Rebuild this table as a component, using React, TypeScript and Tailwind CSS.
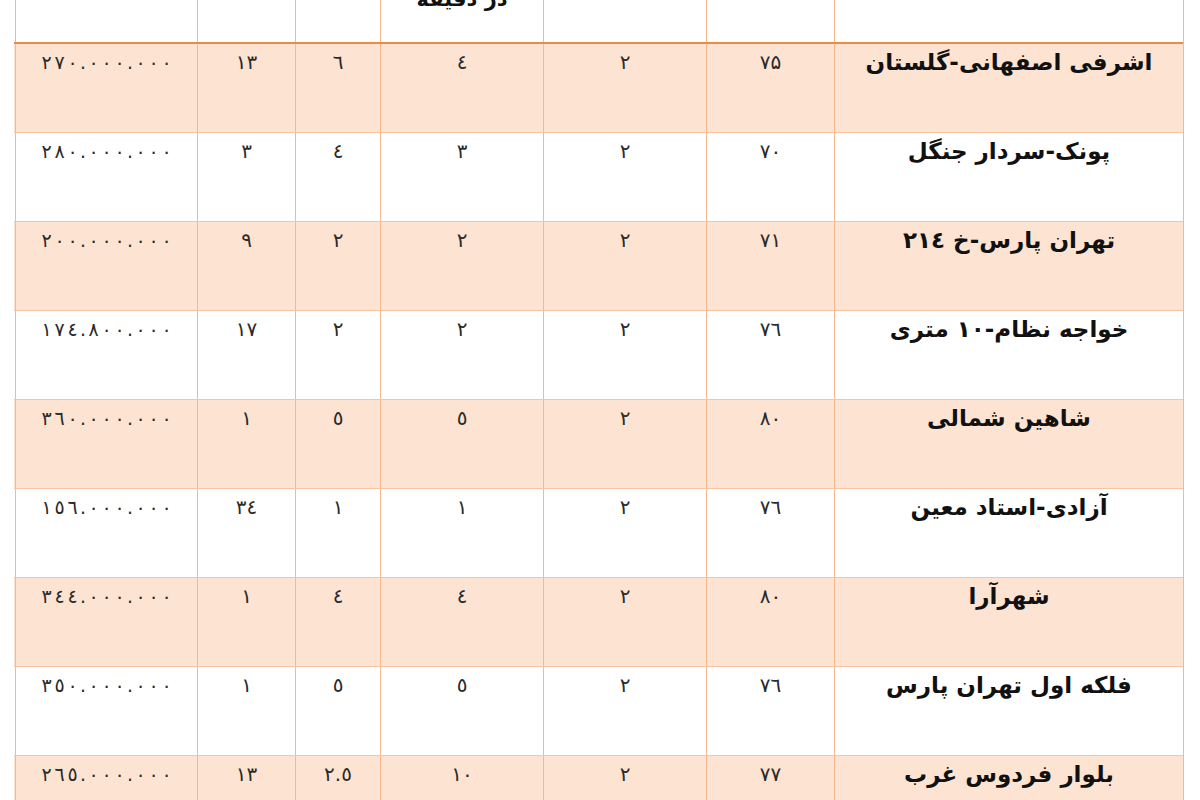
import React from 'react';

type Row = {
  name: string;
  area: string;
  rooms: string;
  minutes: string;
  floor: string;
  age: string;
  price: string;
};

const rows: Row[] = [
  { name: 'اشرفی اصفهانی-گلستان', area: '۷۵', rooms: '۲', minutes: '٤', floor: '٦', age: '۱۳', price: '۲۷۰.۰۰۰.۰۰۰' },
  { name: 'پونک-سردار جنگل', area: '۷۰', rooms: '۲', minutes: '۳', floor: '٤', age: '۳', price: '۲۸۰.۰۰۰.۰۰۰' },
  { name: 'تهران پارس-خ ۲۱٤', area: '۷۱', rooms: '۲', minutes: '۲', floor: '۲', age: '۹', price: '۲۰۰.۰۰۰.۰۰۰' },
  { name: 'خواجه نظام-۱۰ متری', area: '۷٦', rooms: '۲', minutes: '۲', floor: '۲', age: '۱۷', price: '۱۷٤.۸۰۰.۰۰۰' },
  { name: 'شاهین شمالی', area: '۸۰', rooms: '۲', minutes: '٥', floor: '٥', age: '۱', price: '۳٦۰.۰۰۰.۰۰۰' },
  { name: 'آزادی-استاد معین', area: '۷٦', rooms: '۲', minutes: '۱', floor: '۱', age: '۳٤', price: '۱٥٦.۰۰۰.۰۰۰' },
  { name: 'شهرآرا', area: '۸۰', rooms: '۲', minutes: '٤', floor: '٤', age: '۱', price: '۳٤٤.۰۰۰.۰۰۰' },
  { name: 'فلکه اول تهران پارس', area: '۷٦', rooms: '۲', minutes: '٥', floor: '٥', age: '۱', price: '۳٥۰.۰۰۰.۰۰۰' },
  { name: 'بلوار فردوس غرب', area: '۷۷', rooms: '۲', minutes: '۱۰', floor: '۲.٥', age: '۱۳', price: '۲٦٥.۰۰۰.۰۰۰' },
];

const cols = 'grid grid-cols-[349px_128px_163px_163px_85px_98px_182px]';
const cell = 'border-l border-[#f4b98e] text-center';

function NumCell({ value }: { value: string }) {
  return (
    <div className={`${cell} pt-[4px] text-[20px] leading-[28px] tracking-[1px] text-[#2a2a2a]`}>
      <span dir="ltr">{value}</span>
    </div>
  );
}

// the sheet spaces the price digits out on a fixed pitch
function PriceCell({ value }: { value: string }) {
  return (
    <div className={`${cell} flex justify-center pt-[4px] text-[19px] leading-[28px] text-[#2a2a2a]`}>
      <div dir="ltr" className="flex">
        {value.split('').map((c, i) => (
          <span key={i} className={c === '.' ? 'w-[8px] text-center' : 'w-[13px] text-center'}>
            {c}
          </span>
        ))}
      </div>
    </div>
  );
}

export default function App() {
  return (
    <div
      dir="rtl"
      className="h-[800px] w-[1200px] overflow-hidden bg-white"
      style={{ fontFamily: '"DejaVu Sans", "Noto Sans", sans-serif' }}
    >
      <div className="mr-[16px] w-[1170px] border-r border-[#f4b98e]">
        {/* header: only the last line of the minutes column shows */}
        <div className={`${cols} -mt-[14px] h-[58px] border-b-2 border-[#ef8a43] bg-white`}>
          <div className={cell} />
          <div className={cell} />
          <div className={cell} />
          <div className={`${cell} text-[21px] font-bold leading-[26px] text-[#111]`}>در دقیقه</div>
          <div className={cell} />
          <div className={cell} />
          <div className={cell} />
        </div>

        {rows.map((r, i) => (
          <div
            key={i}
            className={`${cols} h-[89px] border-b border-[#f6c4a0] ${i % 2 === 0 ? 'bg-[#fce3d2]' : 'bg-white'}`}
          >
            <div className={`${cell} pt-[3px] text-[23px] font-bold leading-[30px] text-[#111]`}>
              {r.name}
            </div>
            <NumCell value={r.area} />
            <NumCell value={r.rooms} />
            <NumCell value={r.minutes} />
            <NumCell value={r.floor} />
            <NumCell value={r.age} />
            <PriceCell value={r.price} />
          </div>
        ))}
      </div>
    </div>
  );
}
